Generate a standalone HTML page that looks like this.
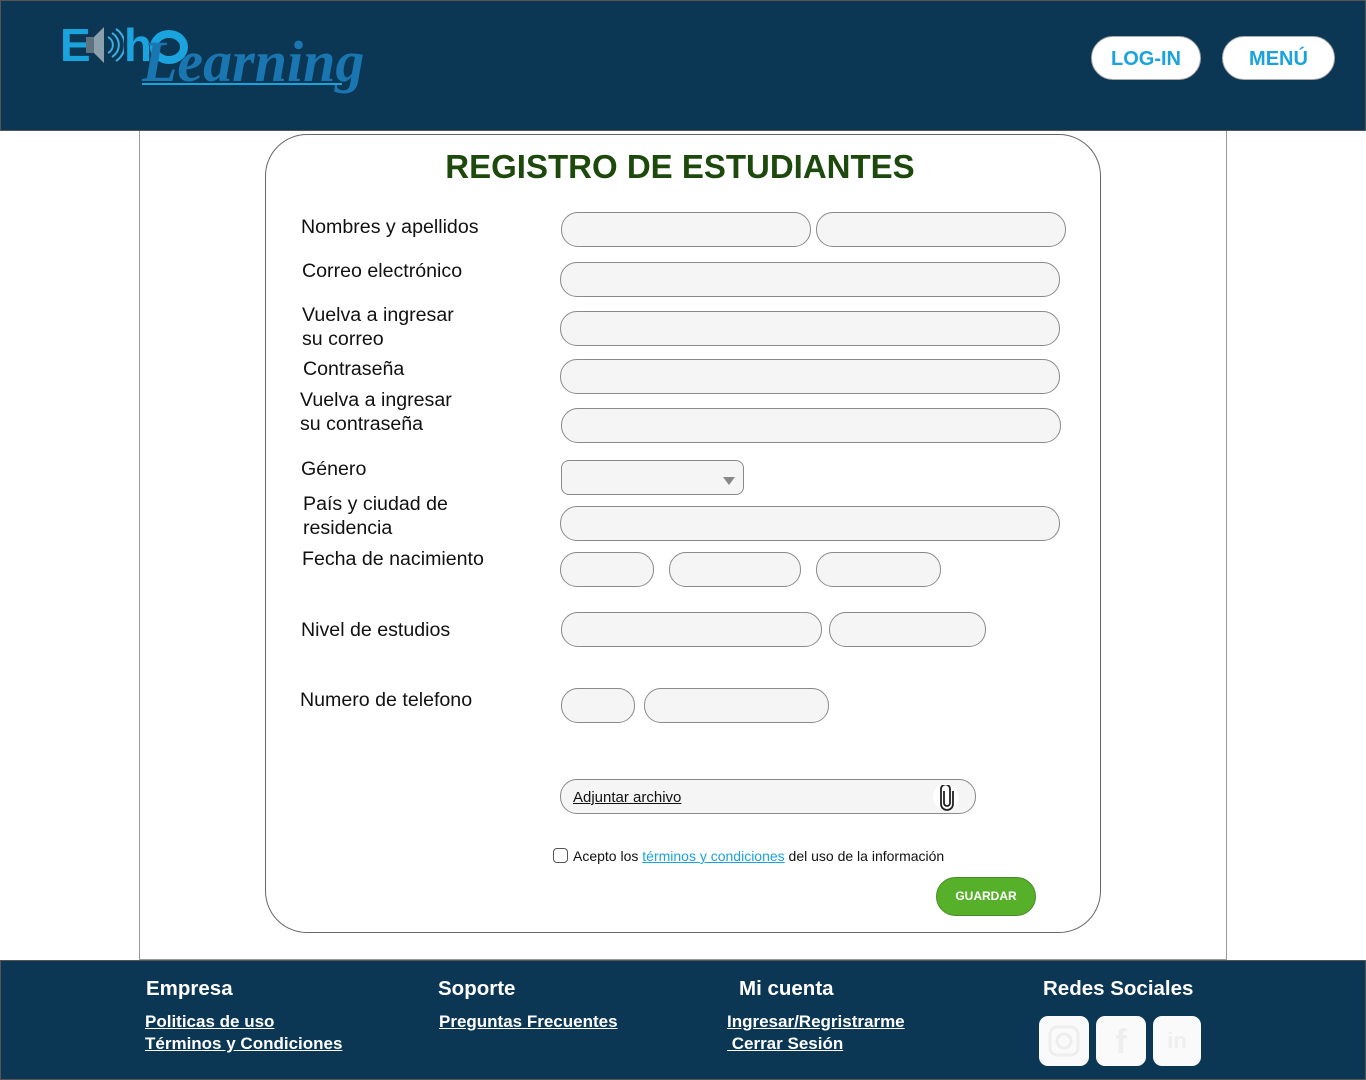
<!DOCTYPE html>
<html><head><meta charset="utf-8"><style>
*{box-sizing:border-box;margin:0;padding:0}
body{width:1366px;height:1080px;position:relative;background:#fff;font-family:"Liberation Sans",sans-serif;overflow:hidden}
.a{position:absolute}
.hdr{left:0;top:0;width:1366px;height:131px;background:#0b3654;border:1px solid #555}
.btn{background:#fff;border-radius:22px;color:#1aa3dc;font-weight:bold;font-size:20px;text-align:center;line-height:44px;height:44px;border:1px solid #aaa}
.in{background:#f5f5f5;border:1px solid #8a8a8a;border-radius:17px;height:35px}
.lb{font-size:19.6px;color:#111;line-height:24px}
.ft{left:0;top:960px;width:1366px;height:120px;background:#0b3654;border:1px solid #555}
.fh{color:#fff;font-weight:bold;font-size:20.5px}
.fl{color:#fff;font-weight:bold;font-size:17px;text-decoration:underline;line-height:22px}
.soc{width:50px;height:50px;background:#fafafa;border-radius:9px;top:1016px}
</style></head><body>
<div class="a hdr"></div>
<div class="a" style="left:60px;top:18px;color:#1aa3dc;font-weight:bold;font-size:46px">E</div>
<svg class="a" style="left:84px;top:25px" width="40" height="42"><rect x="2" y="12" width="8" height="16" fill="#5f7280"/><polygon points="10,12 20,2 20,38 10,28" fill="#8aa0ad"/><path d="M24 12a9 9 0 0 1 0 16M28 8a14 14 0 0 1 0 24M32 4a19 19 0 0 1 0 32" stroke="#3bb0e0" stroke-width="2" fill="none"/></svg>
<div class="a" style="left:124px;top:18px;color:#1aa3dc;font-weight:bold;font-size:46px">h</div>
<div class="a" style="left:150px;top:30px;width:38px;height:34px;border:8px solid #1aa3dc;border-radius:50%"></div>
<div class="a" style="left:142px;top:28px;color:#1a76b0;font-style:italic;font-weight:bold;font-size:58px;font-family:'Liberation Serif',serif">Learning</div>
<div class="a" style="left:142px;top:83px;width:200px;height:2px;background:#1aa3dc"></div>
<div class="a btn" style="left:1091px;top:36px;width:110px">LOG-IN</div>
<div class="a btn" style="left:1222px;top:36px;width:113px">MENÚ</div>

<div class="a" style="left:139px;top:131px;width:1088px;height:829px;border:1px solid #999;border-top:none"></div>
<div class="a" style="left:265px;top:134px;width:836px;height:799px;border:1px solid #666;border-radius:42px"></div>
<div class="a" style="left:265px;top:148px;width:830px;text-align:center;color:#1d4a0c;font-weight:bold;font-size:33px">REGISTRO DE ESTUDIANTES</div>

<div class="a lb" style="left:301px;top:215px">Nombres y apellidos</div>
<div class="a in" style="left:561px;top:212px;width:250px"></div>
<div class="a in" style="left:816px;top:212px;width:250px"></div>
<div class="a lb" style="left:302px;top:259px">Correo electrónico</div>
<div class="a in" style="left:560px;top:262px;width:500px"></div>
<div class="a lb" style="left:302px;top:303px">Vuelva a ingresar<br>su correo</div>
<div class="a in" style="left:560px;top:311px;width:500px"></div>
<div class="a lb" style="left:303px;top:357px">Contraseña</div>
<div class="a in" style="left:560px;top:359px;width:500px"></div>
<div class="a lb" style="left:300px;top:388px">Vuelva a ingresar<br>su contraseña</div>
<div class="a in" style="left:561px;top:408px;width:500px"></div>
<div class="a lb" style="left:301px;top:457px">Género</div>
<div class="a in" style="left:561px;top:460px;width:183px;border-radius:8px"></div>
<div class="a" style="left:723px;top:477px;border-left:6px solid transparent;border-right:6px solid transparent;border-top:8px solid #888"></div>
<div class="a lb" style="left:303px;top:492px">País y ciudad de<br>residencia</div>
<div class="a in" style="left:560px;top:506px;width:500px"></div>
<div class="a lb" style="left:302px;top:547px">Fecha de nacimiento</div>
<div class="a in" style="left:560px;top:552px;width:94px"></div>
<div class="a in" style="left:669px;top:552px;width:132px"></div>
<div class="a in" style="left:816px;top:552px;width:125px"></div>
<div class="a lb" style="left:301px;top:618px">Nivel de estudios</div>
<div class="a in" style="left:561px;top:612px;width:261px"></div>
<div class="a in" style="left:829px;top:612px;width:157px"></div>
<div class="a lb" style="left:300px;top:688px">Numero de telefono</div>
<div class="a in" style="left:561px;top:688px;width:74px"></div>
<div class="a in" style="left:644px;top:688px;width:185px"></div>

<div class="a in" style="left:560px;top:779px;width:416px"></div>
<div class="a" style="left:573px;top:789px;font-size:15px;text-decoration:underline;color:#111">Adjuntar archivo</div>
<div class="a" style="left:933px;top:784px;width:26px;height:26px;border-radius:13px;background:#fff"></div>
<svg class="a" style="left:939px;top:785px" width="16" height="26"><path d="M5 6v12a3 3 0 0 0 6 0V4a4.5 4.5 0 0 0-9 0v15a6 6 0 0 0 12 0V6" stroke="#222" stroke-width="1.8" fill="none"/></svg>

<div class="a" style="left:553px;top:848px;width:15px;height:15px;border:1px solid #555;border-radius:4px"></div>
<div class="a" style="left:573px;top:848px;font-size:14px;color:#111">Acepto los <span style="color:#1aa3dc;text-decoration:underline">términos y condiciones</span> del uso de la información</div>
<div class="a" style="left:936px;top:877px;width:100px;height:39px;border-radius:20px;background:#57b02a;border:1px solid #4a8a26;color:#fff;font-weight:bold;font-size:12px;text-align:center;line-height:37px">GUARDAR</div>

<div class="a ft"></div>
<div class="a fh" style="left:146px;top:977px">Empresa</div>
<div class="a fl" style="left:145px;top:1011px">Politicas de uso<br>Términos y Condiciones</div>
<div class="a fh" style="left:438px;top:977px">Soporte</div>
<div class="a fl" style="left:439px;top:1011px">Preguntas Frecuentes</div>
<div class="a fh" style="left:739px;top:977px">Mi cuenta</div>
<div class="a fl" style="left:727px;top:1011px">Ingresar/Regristrarme<br>&nbsp;Cerrar Sesión</div>
<div class="a fh" style="left:1043px;top:977px">Redes Sociales</div>
<div class="a soc" style="left:1039px"><svg width="50" height="50"><rect x="11" y="11" width="28" height="28" rx="7" stroke="#eee" stroke-width="3" fill="none"/><circle cx="25" cy="25" r="7" stroke="#eee" stroke-width="3" fill="none"/></svg></div>
<div class="a soc" style="left:1096px;font:bold 34px 'Liberation Sans';color:#eee;text-align:center;line-height:52px">f</div>
<div class="a soc" style="left:1153px;width:48px;font:bold 22px 'Liberation Sans';color:#eee;text-align:center;line-height:50px">in</div>
</body></html>
